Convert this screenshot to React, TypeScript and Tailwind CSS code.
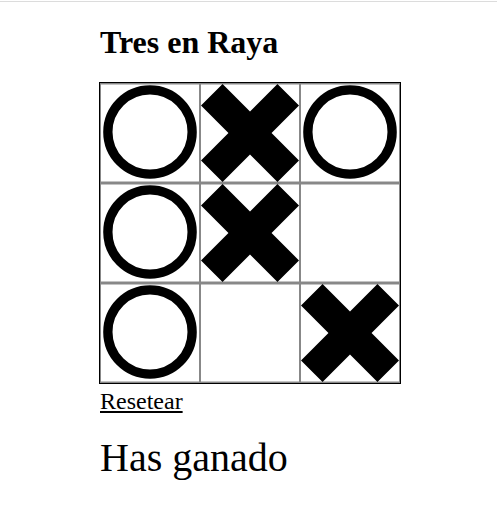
import React from 'react';

type Mark = 'X' | 'O' | '';

const BOARD: Mark[] = ['O', 'X', 'O', 'O', 'X', '', 'O', '', 'X'];

const Cross = () => (
  <svg viewBox="0 0 100 100" className="block w-full h-full">
    <polygon
      points="22,0 50,28 78,0 100,22 72,50 100,78 78,100 50,72 22,100 0,78 28,50 0,22"
      fill="#000"
    />
  </svg>
);

const Circle = () => (
  <svg viewBox="0 0 100 100" className="block w-full h-full">
    <circle cx="50" cy="49" r="43" fill="none" stroke="#000" strokeWidth="9.5" />
  </svg>
);

const Cell: React.FC<{ mark: Mark }> = ({ mark }) => (
  <div className="w-[100px] h-[100px] box-border border border-[#888] bg-white shadow-[inset_0_1px_0_#c4c4c4,inset_0_-1px_0_#c4c4c4]">
    {mark === 'X' && <Cross />}
    {mark === 'O' && <Circle />}
  </div>
);

export default function App() {
  return (
    <div className="min-h-[522px] bg-white text-black font-['Liberation_Serif','Times_New_Roman',serif]">
      <div className="h-[2px] border-b border-[#dcdcdc]"></div>
      <div className="pl-[99px]">
        <h1 className="mt-[22px] mb-[22px] text-[32px] leading-[36px] font-bold pl-px">Tres en Raya</h1>

        <div className="w-[302px] border border-black grid grid-cols-[100px_100px_100px]">
          {BOARD.map((m, i) => (
            <Cell key={i} mark={m} />
          ))}
        </div>

        <a href="#" className="block w-fit mt-[4px] pl-px text-[24px] leading-[27px] underline text-black">
          Resetear
        </a>

        <p className="mt-[20px] pl-px text-[40px] leading-[45px]">Has ganado</p>
      </div>
    </div>
  );
}
